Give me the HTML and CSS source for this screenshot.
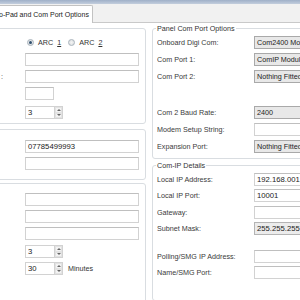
FILE: index.html
```html
<!DOCTYPE html>
<html lang="en">
<head>
  <meta charset="UTF-8">
  <meta name="viewport" content="width=device-width, initial-scale=1.0">
  <title>Panel Options</title>
  <link rel="stylesheet" href="styles.css">
</head>
<body>
  <div class="titlebar"></div>
  <div class="tabstrip">
    <div class="tab">o-Pad and Com Port Options</div>
  </div>

  <div class="panel">
    <div class="col-left">
      <div class="group group-panel">
        <div class="row row-radio">
          <span class="label"></span>
          <div class="radios">
            <label class="radio checked"><span class="dot"></span>ARC <u>1</u></label>
            <label class="radio"><span class="dot"></span>ARC <u>2</u></label>
          </div>
        </div>
        <div class="row">
          <span class="label"></span>
          <div class="field"></div>
        </div>
        <div class="row">
          <span class="label tail">:</span>
          <div class="field"></div>
        </div>
        <div class="row">
          <span class="label"></span>
          <div class="field small"></div>
        </div>
        <div class="row row-spin">
          <span class="label"></span>
          <div class="spin"><div class="spin-box">3</div><div class="spin-btns"><span class="up"></span><span class="down"></span></div></div>
        </div>
      </div>

      <div class="group group-phone">
        <div class="row">
          <span class="label"></span>
          <div class="field">07785499993</div>
        </div>
        <div class="row">
          <span class="label"></span>
          <div class="field"></div>
        </div>
      </div>

      <div class="group group-poll">
        <div class="row">
          <span class="label"></span>
          <div class="field"></div>
        </div>
        <div class="row">
          <span class="label"></span>
          <div class="field"></div>
        </div>
        <div class="row">
          <span class="label"></span>
          <div class="field"></div>
        </div>
        <div class="row row-spin2">
          <span class="label"></span>
          <div class="spin"><div class="spin-box">3</div><div class="spin-btns"><span class="up"></span><span class="down"></span></div></div>
        </div>
        <div class="row">
          <span class="label"></span>
          <div class="spin"><div class="spin-box">30</div><div class="spin-btns"><span class="up"></span><span class="down"></span></div><span class="unit">Minutes</span></div>
        </div>
      </div>
    </div>

    <div class="col-right">
      <fieldset class="box box-com">
        <legend>Panel Com Port Options</legend>
        <div class="row">
          <span class="label">Onboard Digi Com:</span>
          <div class="combo">Com2400 Module</div>
        </div>
        <div class="row">
          <span class="label">Com Port 1:</span>
          <div class="combo">ComIP Module</div>
        </div>
        <div class="row">
          <span class="label">Com Port 2:</span>
          <div class="combo">Nothing Fitted</div>
        </div>
        <div class="spacer"></div>
        <div class="row">
          <span class="label">Com 2 Baud Rate:</span>
          <div class="combo">2400</div>
        </div>
        <div class="row">
          <span class="label">Modem Setup String:</span>
          <div class="field wide"></div>
        </div>
        <div class="row">
          <span class="label">Expansion Port:</span>
          <div class="combo">Nothing Fitted</div>
        </div>
      </fieldset>

      <fieldset class="box box-ip">
        <legend>Com-IP Details</legend>
        <div class="row">
          <span class="label">Local IP Address:</span>
          <div class="field wide">192.168.001.100</div>
        </div>
        <div class="row">
          <span class="label">Local IP Port:</span>
          <div class="field wide">10001</div>
        </div>
        <div class="row">
          <span class="label">Gateway:</span>
          <div class="field wide"></div>
        </div>
        <div class="row">
          <span class="label">Subnet Mask:</span>
          <div class="field wide grey">255.255.255.0</div>
        </div>
        <div class="spacer-ip"></div>
        <div class="row">
          <span class="label">Polling/SMG IP Address:</span>
          <div class="field wide"></div>
        </div>
        <div class="row">
          <span class="label">Name/SMG Port:</span>
          <div class="field wide"></div>
        </div>
      </fieldset>
    </div>
  </div>
</body>
</html>
```

FILE: styles.css
```css
* {
  box-sizing: border-box;
}
body {
  margin: 0;
  width: 300px;
  height: 300px;
  overflow: hidden;
  background: #fff;
  color: #3a3a3a;
  font-family: 'Liberation Sans', Arial, sans-serif;
  font-size: 7.2px;
}
.titlebar {
  height: 4px;
  background: linear-gradient(#9fb0c8, #c3cedd);
}
.tabstrip {
  height: 19px;
  background: #f1f1f1;
  border-bottom: 1px solid #c9c9c9;
  display: flex;
  align-items: flex-end;
}
.tab {
  height: 18px;
  margin-bottom: -1px;
  margin-left: -1px;
  padding: 0 3px 0 0;
  line-height: 17px;
  background: #fff;
  border: 1px solid #c2c2c2;
  border-left: none;
  border-bottom: none;
  border-top-right-radius: 2px;
  color: #222;
  font-size: 7px;
  white-space: nowrap;
}
.panel {
  display: flex;
  align-items: flex-start;
  gap: 6px;
  margin-left: -60px;
}
.col-left {
  width: 206px;
  flex: none;
}
.col-right {
  width: 180px;
  flex: none;
}
.group {
  border: 1px solid #d9dde1;
  border-radius: 3px;
  padding: 4px 6px 2px 5px;
}
.group-panel {
  margin-top: 5px;
}
.group-phone {
  margin-top: 5px;
  padding-top: 8px;
  padding-bottom: 7px;
}
.group-poll {
  margin-top: 3px;
  padding-top: 7px;
  height: 130px;
}
.row {
  display: grid;
  grid-template-columns: 79px 1fr;
  align-items: center;
  height: 17px;
}
.row-radio {
  height: 18px;
}
.row-spin {
  margin-top: 2px;
}
.row-spin2 {
  margin-top: 1px;
}
.label {
  white-space: nowrap;
  overflow: hidden;
}
.label.tail {
  text-align: right;
  padding-right: 22px;
}
.field {
  height: 13px;
  border: 1px solid #d2d2d2;
  border-top-color: #bfbfbf;
  background: #fff;
  padding-left: 2px;
  line-height: 11px;
  color: #222;
  font-size: 7.7px;
  white-space: nowrap;
  overflow: hidden;
}
.field.small {
  width: 29px;
}
.field.wide {
  width: 70px;
}
.field.grey {
  background: #ececec;
  border-color: #b4b4b4;
}
.radios {
  display: flex;
  gap: 7px;
  padding-left: 2px;
}
.radio {
  display: flex;
  align-items: center;
  gap: 4px;
  color: #333;
}
.dot {
  width: 7px;
  height: 7px;
  border-radius: 50%;
  border: 1px solid #a9b3bc;
  background: radial-gradient(circle, #f4f4f4, #d6dadd);
  display: flex;
  align-items: center;
  justify-content: center;
}
.radio.checked .dot::after {
  content: '';
  width: 3px;
  height: 3px;
  border-radius: 50%;
  background: #2f4f6d;
}
.spin {
  display: flex;
  align-items: center;
}
.spin-box {
  width: 29px;
  height: 13px;
  border: 1px solid #d2d2d2;
  border-right: none;
  padding-left: 2px;
  line-height: 11px;
  color: #222;
  font-size: 7.7px;
}
.spin-btns {
  width: 9px;
  height: 13px;
  border: 1px solid #d2d2d2;
  display: flex;
  flex-direction: column;
  background: #f3f3f3;
}
.spin-btns span {
  flex: 1;
  display: flex;
  align-items: center;
  justify-content: center;
  border: 1px solid #e2e2e2;
}
.spin-btns .up::after {
  content: '';
  border-left: 2px solid transparent;
  border-right: 2px solid transparent;
  border-bottom: 2px solid #666;
}
.spin-btns .down::after {
  content: '';
  border-left: 2px solid transparent;
  border-right: 2px solid transparent;
  border-top: 2px solid #666;
}
.unit {
  margin-left: 5px;
  color: #333;
}
.box {
  margin: 0;
  border: 1px solid #d9dde1;
  border-radius: 3px;
  padding: 1px 0 3px 4px;
  min-width: 0;
}
.box legend {
  padding: 0 1px;
  margin-left: -1px;
  color: #333;
  line-height: 9px;
}
.box-com {
  margin-top: 1px;
}
.box-ip {
  margin-top: 2px;
  height: 140px;
}
.box .row {
  grid-template-columns: 97px 1fr;
}
.box-ip .row {
  height: 16.5px;
}
.combo {
  height: 13px;
  width: 70px;
  border: 1px solid #a9a9a9;
  background: #e8e8e8;
  padding-left: 2px;
  line-height: 11px;
  color: #222;
  white-space: nowrap;
  overflow: hidden;
}
.spacer {
  height: 19px;
}
.spacer-ip {
  height: 10.75px;
}
```
